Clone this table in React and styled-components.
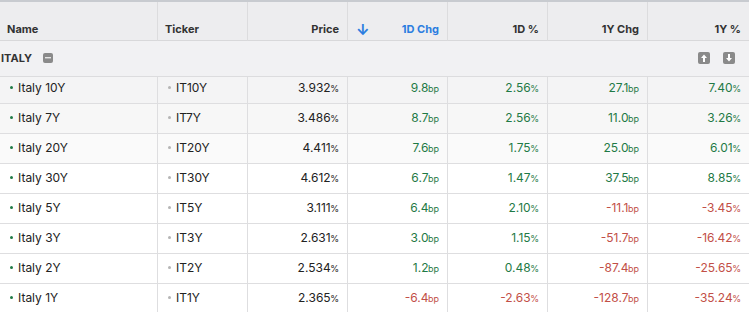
import React from "react";
import styled, { createGlobalStyle } from "styled-components";

const GlobalStyle = createGlobalStyle`
  body {
    margin: 0;
    background: #ffffff;
    font-family: Inter, "Liberation Sans", sans-serif;
  }
`;

const rows = [
  { name: "Italy 10Y", ticker: "IT10Y", price: "3.932", d: "9.8", dp: "2.56", y: "27.1", yp: "7.40", bg: "#f4f4f5" },
  { name: "Italy 7Y", ticker: "IT7Y", price: "3.486", d: "8.7", dp: "2.56", y: "11.0", yp: "3.26", bg: "#f7f7f7" },
  { name: "Italy 20Y", ticker: "IT20Y", price: "4.411", d: "7.6", dp: "1.75", y: "25.0", yp: "6.01", bg: "#fafafa" },
  { name: "Italy 30Y", ticker: "IT30Y", price: "4.612", d: "6.7", dp: "1.47", y: "37.5", yp: "8.85" },
  { name: "Italy 5Y", ticker: "IT5Y", price: "3.111", d: "6.4", dp: "2.10", y: "-11.1", yp: "-3.45" },
  { name: "Italy 3Y", ticker: "IT3Y", price: "2.631", d: "3.0", dp: "1.15", y: "-51.7", yp: "-16.42" },
  { name: "Italy 2Y", ticker: "IT2Y", price: "2.534", d: "1.2", dp: "0.48", y: "-87.4", yp: "-25.65" },
  { name: "Italy 1Y", ticker: "IT1Y", price: "2.365", d: "-6.4", dp: "-2.63", y: "-128.7", yp: "-35.24" },
];

const columns = "158px 90px 100px 100px 100px 100px 101px";

const Table = styled.div`
  width: 749px;
  border-top: 2px solid #c8cbd0;
  color: #222;
`;

const Row = styled.div`
  display: grid;
  grid-template-columns: ${columns};
  background: ${(p) => p.bg || "#ffffff"};
`;

const HeadCell = styled.div`
  box-sizing: border-box;
  height: 39px;
  display: flex;
  align-items: flex-end;
  justify-content: ${(p) => (p.left ? "flex-start" : "space-between")};
  padding: 0 8px 3px ${(p) => (p.left ? "7px" : "8px")};
  background: #ededef;
  border-right: 1px solid #dcdcde;
  border-bottom: 1px solid #d8d8da;
  font-size: 11px;
  line-height: 15px;
  font-weight: 700;
  color: ${(p) => (p.active ? "#2b7de0" : "#333")};
  &:last-child {
    border-right: none;
  }
`;

const SortArrow = styled.span`
  font-size: 15px;
  line-height: 15px;
  color: #2b7de0;
  font-weight: 700;
`;

const GroupRow = styled.div`
  box-sizing: border-box;
  height: 36px;
  display: flex;
  align-items: center;
  padding: 0 14px 2px 1px;
  background: #f1f1f3;
  border-bottom: 1px solid #dcdcde;
  font-size: 11px;
  font-weight: 700;
  color: #333;
`;

const GroupTitle = styled.span`
  margin-right: 11px;
`;

const Spacer = styled.div`
  flex: 1;
`;

const IconBox = styled.span`
  width: ${(p) => p.size}px;
  height: ${(p) => p.size}px;
  border-radius: 2px;
  background: #8a8a8a;
  display: inline-flex;
  align-items: center;
  justify-content: center;
  margin-left: ${(p) => p.gap || 0}px;
`;

const Cell = styled.div`
  box-sizing: border-box;
  height: ${(p) => p.h}px;
  display: flex;
  align-items: center;
  justify-content: ${(p) => (p.left ? "flex-start" : "flex-end")};
  padding: 0 8px ${(p) => (p.first ? 6 : 2)}px 10px;
  border-right: 1px solid #dedee0;
  border-bottom: 1px solid #dedee0;
  font-size: 12px;
  color: ${(p) => (p.tone === "up" ? "#1f7a46" : p.tone === "down" ? "#c24f47" : "#222")};
  white-space: nowrap;
  &:last-child {
    border-right: none;
  }
`;

const Dot = styled.span`
  width: 3px;
  height: 3px;
  border-radius: 50%;
  background: ${(p) => (p.gray ? "#b5b5b5" : "#1f7a46")};
  margin-right: 5px;
  flex-shrink: 0;
`;

const Unit = styled.span`
  font-size: 9px;
  margin-left: -0.5px;
  position: relative;
  top: 1px;
`;

function tone(v) {
  return v.startsWith("-") ? "down" : "up";
}

function Value({ v, unit, h, first }) {
  return (
    <Cell h={h} first={first} tone={tone(v)}>
      {v}
      <Unit>{unit}</Unit>
    </Cell>
  );
}

function MinusIcon() {
  return (
    <IconBox size={10}>
      <svg width="6" height="2" viewBox="0 0 6 2">
        <rect width="6" height="1.4" fill="#e6e6e6" />
      </svg>
    </IconBox>
  );
}

function ArrowIcon({ down, gap }) {
  return (
    <IconBox size={12} gap={gap}>
      <svg width="8" height="8" viewBox="0 0 8 8">
        <path
          d={down ? "M3 0h2v4h2L4 7.5 1 4h2z" : "M3 8h2V4h2L4 0.5 1 4h2z"}
          fill="#ffffff"
        />
      </svg>
    </IconBox>
  );
}

export default function App() {
  return (
    <>
      <GlobalStyle />
      <Table>
        <Row>
          <HeadCell left>Name</HeadCell>
          <HeadCell left>Ticker</HeadCell>
          <HeadCell>
            <span />
            Price
          </HeadCell>
          <HeadCell active>
            <SortArrow>↓</SortArrow>
            1D Chg
          </HeadCell>
          <HeadCell>
            <span />
            1D %
          </HeadCell>
          <HeadCell>
            <span />
            1Y Chg
          </HeadCell>
          <HeadCell>
            <span />
            1Y %
          </HeadCell>
        </Row>
        <GroupRow>
          <GroupTitle>ITALY</GroupTitle>
          <MinusIcon />
          <Spacer />
          <ArrowIcon />
          <ArrowIcon down gap={13} />
        </GroupRow>
        {rows.map((r, i) => {
          const first = i === 0;
          const h = first ? 27 : 30;
          return (
            <Row key={r.ticker} bg={r.bg}>
              <Cell h={h} first={first} left>
                <Dot />
                {r.name}
              </Cell>
              <Cell h={h} first={first} left>
                <Dot gray />
                {r.ticker}
              </Cell>
              <Cell h={h} first={first}>
                {r.price}
                <Unit>%</Unit>
              </Cell>
              <Value v={r.d} unit="bp" h={h} first={first} />
              <Value v={r.dp} unit="%" h={h} first={first} />
              <Value v={r.y} unit="bp" h={h} first={first} />
              <Value v={r.yp} unit="%" h={h} first={first} />
            </Row>
          );
        })}
      </Table>
    </>
  );
}
